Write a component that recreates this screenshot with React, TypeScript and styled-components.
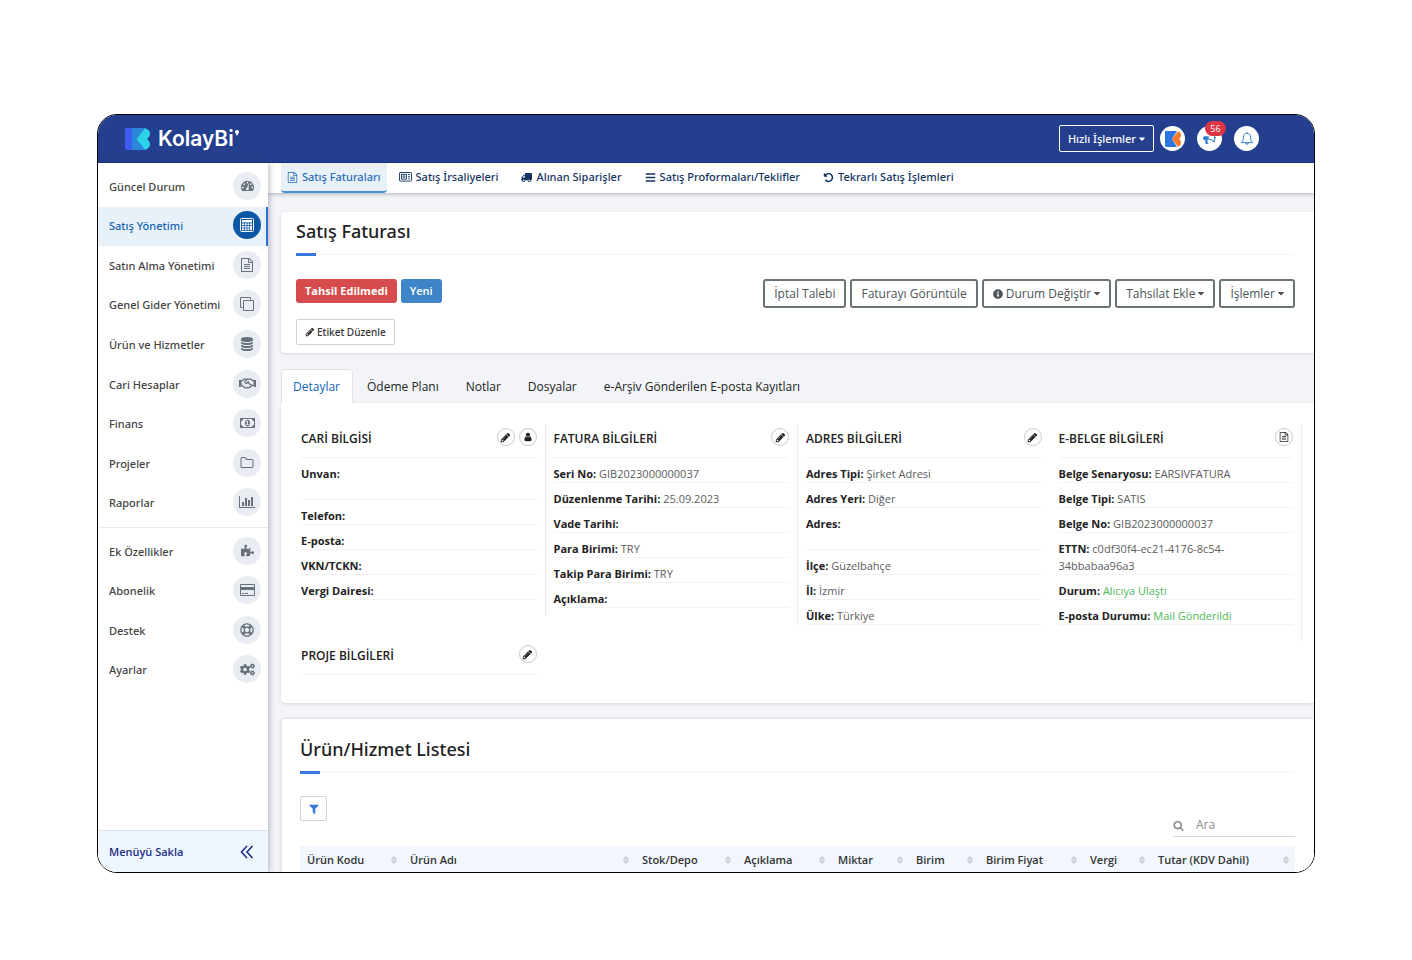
import React from "react";
import styled, { createGlobalStyle, css } from "styled-components";
import {
  FaRegHandshake,
  FaPuzzlePiece,
  FaRegLifeRing,
  FaCogs,
  FaTruck,
  FaBars,
  FaInfoCircle,
} from "react-icons/fa";

/* ---------- icons ---------- */

type IconProps = { size?: number };

const glyph = (d: string, width = 1792) =>
  function Glyph({ size = 14 }: IconProps) {
    return (
      <svg height={size} width={Math.round((size * width) / 1792)} viewBox={`0 0 ${width} 1792`} fill="currentColor" aria-hidden="true">
        <path d={d} />
      </svg>
    );
  };

const PencilIcon = glyph(
  "M491 1536l91-91-235-235-91 91v107h128v128h107zm523-928q0-22-22-22-10 0-17 7l-542 542q-7 7-7 17 0 22 22 22 10 0 17-7l542-542q7-7 7-17zm-54-192l416 416-832 832h-416v-416zm683 96q0 53-37 90l-166 166-416-416 166-165q36-38 90-38 53 0 91 38l235 234q37 39 37 91z"
);
const FileIcon = glyph(
  "M1596 380q28 28 48 76t20 88v1152q0 40-28 68t-68 28h-1344q-40 0-68-28t-28-68v-1600q0-40 28-68t68-28h896q40 0 88 20t76 48zm-444-244v376h376q-10-29-22-41l-313-313q-12-12-41-22zm384 1528v-1024h-416q-40 0-68-28t-28-68v-416h-768v1536h1280zm-1024-864q0-14 9-23t23-9h704q14 0 23 9t9 23v64q0 14-9 23t-23 9h-704q-14 0-23-9t-9-23v-64zm736 224q14 0 23 9t9 23v64q0 14-9 23t-23 9h-704q-14 0-23-9t-9-23v-64q0-14 9-23t23-9h704zm0 256q14 0 23 9t9 23v64q0 14-9 23t-23 9h-704q-14 0-23-9t-9-23v-64q0-14 9-23t23-9h704z"
);
const DatabaseIcon = glyph(
  "M896 768q237 0 443-43t325-127v170q0 69-103 128t-280 93.5-385 34.5-385-34.5-280-93.5-103-128v-170q119 84 325 127t443 43zm0 768q237 0 443-43t325-127v170q0 69-103 128t-280 93.5-385 34.5-385-34.5-280-93.5-103-128v-170q119 84 325 127t443 43zm0-384q237 0 443-43t325-127v170q0 69-103 128t-280 93.5-385 34.5-385-34.5-280-93.5-103-128v-170q119 84 325 127t443 43zm0-1152q208 0 385 34.5t280 93.5 103 128v128q0 69-103 128t-280 93.5-385 34.5-385-34.5-280-93.5-103-128v-128q0-69 103-128t280-93.5 385-34.5z"
);
const FolderIcon = glyph(
  "M1600 1312v-704q0-40-28-68t-68-28h-704q-40 0-68-28t-28-68v-64q0-40-28-68t-68-28h-320q-40 0-68 28t-28 68v960q0 40 28 68t68 28h1216q40 0 68-28t28-68zm128-704v704q0 92-66 158t-158 66h-1216q-92 0-158-66t-66-158v-960q0-92 66-158t158-66h320q92 0 158 66t66 158v32h672q92 0 158 66t66 158z"
);
const UndoIcon = glyph(
  "M1664 896q0 156-61 298t-164 245-245 164-298 61q-172 0-327-72.5t-264-204.5q-7-10-6.5-22.5t8.5-20.5l137-138q10-9 25-9 16 2 23 12 73 95 179 147t225 52q104 0 198.5-40.5t163.5-109.5 109.5-163.5 40.5-198.5-40.5-198.5-109.5-163.5-163.5-109.5-198.5-40.5q-98 0-188 35.5t-160 101.5l137 138q31 30 14 69-17 40-59 40h-448q-26 0-45-19t-19-45v-448q0-42 40-59 39-17 69 14l130 129q107-101 244.5-156.5t284.5-55.5q156 0 298 61t245 164 164 245 61 298z"
);
const CaretIcon = glyph(
  "M1024 704q0 26-19 45l-448 448q-19 19-45 19t-45-19l-448-448q-19-19-19-45t19-45 45-19h896q26 0 45 19t19 45z",
  1024
);
const FilterIcon = glyph(
  "M1595 295q17 41-14 70l-493 493v742q0 42-40 59-13 5-24 5-27 0-45-19l-256-256q-19-19-19-45v-486l-493-493q-31-29-14-70 17-39 59-39h1280q42 0 59 39z"
);
const ChartIcon = glyph(
  "M640 896v512h-256v-512h256zm384-512v1024h-256v-1024h256zm1024 1152v128h-2048v-1536h128v1408h1920zm-640-896v768h-256v-768h256zm384-384v1152h-256v-1152h256z",
  2048
);
const CloneIcon = glyph(
  "M1664 1632v-1088q0-13-9.5-22.5t-22.5-9.5h-1088q-13 0-22.5 9.5t-9.5 22.5v1088q0 13 9.5 22.5t22.5 9.5h1088q13 0 22.5-9.5t9.5-22.5zm128-1088v1088q0 66-47 113t-113 47h-1088q-66 0-113-47t-47-113v-1088q0-66 47-113t113-47h1088q66 0 113 47t47 113zm-384-384v160h-128v-160q0-13-9.5-22.5t-22.5-9.5h-1088q-13 0-22.5 9.5t-9.5 22.5v1088q0 13 9.5 22.5t22.5 9.5h160v128h-160q-66 0-113-47t-47-113v-1088q0-66 47-113t113-47h1088q66 0 113 47t47 113z"
);
const CardIcon = glyph(
  "M1760 128q66 0 113 47t47 113v1216q0 66-47 113t-113 47h-1600q-66 0-113-47t-47-113v-1216q0-66 47-113t113-47h1600zm-1600 128q-13 0-22.5 9.5t-9.5 22.5v224h1664v-224q0-13-9.5-22.5t-22.5-9.5h-1600zm1600 1280q13 0 22.5-9.5t9.5-22.5v-608h-1664v608q0 13 9.5 22.5t22.5 9.5h1600zm-1504-128v-128h256v128h-256zm384 0v-128h384v128h-384z",
  1920
);
const MoneyIcon = glyph(
  "M768 1152h384v-96h-128v-448h-114l-148 137 77 80q42-37 55-57h2v288h-128v96zm512-256q0 70-21 142t-59.5 134-101.5 101-138 39-138-39-101.5-101-59.5-134-21-142 21-142 59.5-134 101.5-101 138-39 138 39 101.5 101 59.5 134 21 142zm512 256v-512q-106 0-181-75t-75-181h-1152q0 106-75 181t-181 75v512q106 0 181 75t75 181h1152q0-106 75-181t181-75zm128-832v1152q0 26-19 45t-45 19h-1792q-26 0-45-19t-19-45v-1152q0-26 19-45t45-19h1792q26 0 45 19t19 45z",
  1920
);
const DashboardIcon = glyph(
  "M384 1152q0-53-37.5-90.5t-90.5-37.5-90.5 37.5-37.5 90.5 37.5 90.5 90.5 37.5 90.5-37.5 37.5-90.5zm192-448q0-53-37.5-90.5t-90.5-37.5-90.5 37.5-37.5 90.5 37.5 90.5 90.5 37.5 90.5-37.5 37.5-90.5zm428 481l101-382q6-26-7.5-48.5t-38.5-29.5-48 6.5-30 39.5l-101 382q-60 5-107 43.5t-63 98.5q-20 77 20 146t117 89 146-20 89-117q16-60-6-117t-72-91zm660-33q0-53-37.5-90.5t-90.5-37.5-90.5 37.5-37.5 90.5 37.5 90.5 90.5 37.5 90.5-37.5 37.5-90.5zm-640-640q0-53-37.5-90.5t-90.5-37.5-90.5 37.5-37.5 90.5 37.5 90.5 90.5 37.5 90.5-37.5 37.5-90.5zm448 192q0-53-37.5-90.5t-90.5-37.5-90.5 37.5-37.5 90.5 37.5 90.5 90.5 37.5 90.5-37.5 37.5-90.5zm320 448q0 261-141 483-19 29-54 29h-1402q-35 0-54-29-141-221-141-483 0-182 71-348t191-286 286-191 348-71 348 71 286 191 191 286 71 348z"
);
const SearchIcon = glyph(
  "M1216 832q0-185-131.5-316.5t-316.5-131.5-316.5 131.5-131.5 316.5 131.5 316.5 316.5 131.5 316.5-131.5 131.5-316.5zm512 832q0 52-38 90t-90 38q-54 0-90-38l-343-342q-179 124-399 124-143 0-273.5-55.5t-225-150-150-225-55.5-273.5 55.5-273.5 150-225 225-150 273.5-55.5 273.5 55.5 225 150 150 225 55.5 273.5q0 220-124 399l343 343q37 37 37 90z"
);
const UserIcon = glyph(
  "M1536 1399q0 109-62.5 187t-150.5 78h-854q-88 0-150.5-78t-62.5-187q0-85 8.5-160.5t31.5-152 58.5-131 94-89 134.5-34.5q131 128 313 128t313-128q76 0 134.5 34.5t94 89 58.5 131 31.5 152 8.5 160.5zm-256-887q0 159-112.5 271.5t-271.5 112.5-271.5-112.5-112.5-271.5 112.5-271.5 271.5-112.5 271.5 112.5 112.5 271.5z"
);
const MegaphoneIcon = glyph(
  "M1664 640q53 0 90.5 37.5t37.5 90.5-37.5 90.5-90.5 37.5v384q0 52-38 90t-90 38q-417-347-812-380-58 19-91 66t-31 100.5 40 92.5q-20 33-23 65.5t6 58 33.5 55 48 50 61.5 50.5q-29 58-111.5 83t-168.500 11.500-113.500-55.500q-7-23-27.500-87.500t-29-97-20-93.500-8.500-111 15.500-101.500h-122q-66 0-113-47t-47-113v-192q0-66 47-113t113-47h480q435 0 896-384 52 0 90 38t38 90v384zm-128 604v-954q-394 302-768 343v270q377 42 768 341z"
);

const CalculatorIcon = ({ size = 14 }: IconProps) => (
  <svg width={size} height={size} viewBox="0 0 14 14" aria-hidden="true">
    <rect x="0.5" y="0.5" width="13" height="13" rx="1" fill="none" stroke="currentColor" />
    <rect x="2" y="2" width="10" height="2.4" fill="currentColor" />
    {[5.4, 7.9, 10.4].map((y) =>
      [2, 4.7, 7.4].map((x) => <rect key={`${x}-${y}`} x={x} y={y} width="1.9" height="1.8" fill="currentColor" />)
    )}
    <rect x="10.1" y="5.4" width="1.9" height="1.8" fill="currentColor" />
    <rect x="10.1" y="7.9" width="1.9" height="4.3" fill="currentColor" />
  </svg>
);

const DeliveryNoteIcon = () => (
  <svg width="13" height="10" viewBox="0 0 13 10" fill="none" stroke="currentColor" strokeWidth="0.9" aria-hidden="true">
    <rect x="0.5" y="0.5" width="12" height="8.6" rx="0.6" />
    <rect x="2.4" y="2.3" width="5" height="4.8" />
    <circle cx="4.900" cy="4.600" r="1" />
    <path d="M9 2.600h2M9 4.700h2M9 6.800h2" />
  </svg>
);

const BellIcon = () => (
  <svg width="14" height="14" viewBox="0 0 14 14" fill="none" stroke="currentColor" strokeLinejoin="round" aria-hidden="true">
    <path d="M7 1.300c-2.400 0-3.600 1.800-3.600 3.900 0 3-.7 4.100-2 5.400h11.200c-1.300-1.300-2-2.400-2-5.400 0-2.100-1.200-3.900-3.600-3.900z" />
    <path d="M5.600 10.800a1.400 1.400 0 0 0 2.800 0M7 .4v.9" />
  </svg>
);

const DoubleLeftIcon = () => (
  <svg width="14" height="14" viewBox="0 0 14 14" fill="none" stroke="currentColor" strokeWidth="1.6" aria-hidden="true">
    <path d="M7 1L1.500 7 7 13M12.500 1L7 7l5.500 6" />
  </svg>
);

const SortIcon = () => (
  <svg width="6" height="8" viewBox="0 0 6 8" fill="none" stroke="#a9b2bb" strokeWidth="0.8" aria-hidden="true">
    <path d="M.6 2.900L3 .7l2.400 2.200zM.6 5.100L3 7.300l2.400-2.200z" />
  </svg>
);

const BrandMark = () => (
  <svg width="25" height="24" viewBox="0 0 25 24" aria-hidden="true">
    <path d="M0 1h8v22H2a2 2 0 0 1-2-2z" fill="#3f5cf2" />
    <path d="M7 1h14L12 12l9 11H7z" fill="#2b86dc" />
    <path d="M11.500 12L20 1.300c3 .6 5 2.600 5 5.400 0 2.400-1.300 4-3 5.300 1.700 1.200 3 2.900 3 5.300 0 2.800-2 4.800-5 5.400z" fill="#2ad4e6" />
  </svg>
);

const BrandTick = () => (
  <svg width="4" height="6" viewBox="0 0 4 6" aria-hidden="true">
    <path d="M2 0c1.300 0 2 .8 2 1.800C4 3.200 2.600 4.600 2 6 1.400 4.600 0 3.200 0 1.800 0 .8.700 0 2 0z" fill="#fff" />
  </svg>
);

const AccountMark = () => (
  <svg width="16" height="16" viewBox="0 0 16 16" aria-hidden="true">
    <path d="M0 0h12L7 8l5 8H1.500A1.500 1.500 0 0 1 0 14.500z" fill="#2c76e0" />
    <path d="M7 8l6-7.700c2 .6 3 2 3 3.900 0 1.600-.7 2.800-1.800 3.800 1.100 1 1.800 2.200 1.800 3.800 0 1.900-1 3.300-3 3.900z" fill="#f47a2c" />
  </svg>
);

/* ---------- shell ---------- */

const GlobalStyle = createGlobalStyle`
  *, *::before, *::after { box-sizing: border-box; }
  body {
    margin: 0;
    background: #fff;
    color: #333;
    font-family: "Open Sans", "Noto Sans", sans-serif;
    font-size: 11px;
    line-height: 16px;
  }
  button, input { font: inherit; color: inherit; }
  button { cursor: pointer; white-space: nowrap; }
  a { color: inherit; text-decoration: none; }
  ul, dl, dd, h1, h2, h3 { margin: 0; padding: 0; }
  ul { list-style: none; }
  svg { display: block; flex: none; }
`;

/* Noto Sans carries a medium weight, used for navigation and titles. */
const mediumFont = css`
  font-family: "Noto Sans", "Open Sans", sans-serif;
  font-weight: 500;
`;

const Page = styled.div`
  height: 100vh;
  padding: 114px 97px 87px;
`;

const Frame = styled.div`
  display: flex;
  flex-direction: column;
  height: 100%;
  overflow: hidden;
  border: 1px solid #000;
  border-radius: 20px;
`;

const Header = styled.header`
  display: flex;
  align-items: center;
  justify-content: space-between;
  flex: none;
  height: 48px;
  padding: 0 55px 0 27px;
  background: #233f8e;
  border-bottom: 1px solid #17308a;
`;

const Brand = styled.a`
  display: flex;
  align-items: center;
  color: #fff;
  font-family: Inter, "Open Sans", sans-serif;
  font-size: 21px;
  font-weight: 600;
  line-height: 24px;
`;

const BrandName = styled.span`
  margin: 0 1px 0 8px;
`;

const TickSlot = styled.span`
  align-self: flex-start;
  padding-top: 3px;
`;

const HeaderActions = styled.div`
  display: flex;
  align-items: center;
`;

const QuickButton = styled.button`
  display: flex;
  align-items: center;
  gap: 3px;
  height: 27px;
  margin-right: 6px;
  padding: 0 8px;
  color: #fff;
  ${mediumFont}
  background: transparent;
  border: 1px solid #fff;
  border-radius: 2px;
`;

const RoundAction = styled.button`
  position: relative;
  display: grid;
  place-items: center;
  width: 25px;
  height: 25px;
  margin-right: 12px;
  padding: 0;
  color: #2f80d0;
  background: #fff;
  border: 0;
  border-radius: 50%;

  &:last-child { margin-right: 0; }
`;

const CountBadge = styled.span`
  position: absolute;
  top: -5px;
  right: -4px;
  width: 21px;
  height: 15px;
  color: #fff;
  font-size: 9px;
  line-height: 15px;
  text-align: center;
  background: #dc3545;
  border-radius: 8px;
`;

const Body = styled.div`
  display: flex;
  flex: 1;
  min-height: 0;
`;

/* ---------- sidebar ---------- */

const Sidebar = styled.aside`
  position: relative;
  z-index: 1;
  display: flex;
  flex-direction: column;
  flex: none;
  width: 170px;
  background: #fff;
  box-shadow: 1px 0 6px rgba(40, 50, 70, 0.35);
`;

const MenuGroup = styled.ul<{ $height: number }>`
  display: grid;
  grid-auto-rows: 1fr;
  height: ${(p) => p.$height}px;
`;

const MenuDivider = styled.hr`
  width: 100%;
  margin: 4px 0;
  border: 0;
  border-top: 1px solid #e9ecef;
`;

const MenuIcon = styled.span<{ $active?: boolean }>`
  display: grid;
  place-items: center;
  width: 28px;
  height: 28px;
  margin-top: -2px;
  color: ${(p) => (p.$active ? "#fff" : "#66717c")};
  background: ${(p) => (p.$active ? "#0b57a4" : "#e9edf2")};
  border-radius: 50%;
`;

const MenuLink = styled.a<{ $active?: boolean }>`
  display: flex;
  align-items: center;
  justify-content: space-between;
  height: 100%;
  padding: 0 7px 0 11px;
  color: ${(p) => (p.$active ? "#1464b4" : "#444")};
  ${mediumFont}
  ${(p) =>
    p.$active &&
    css`
      background: #e8f1f8;
      box-shadow: inset -2px 0 0 #2f6fd8;
    `}
`;

const SidebarTop = styled.nav`
  flex: 1;
  padding-top: 4px;
`;

const HideMenu = styled.button`
  display: flex;
  align-items: center;
  justify-content: space-between;
  height: 42px;
  padding: 0 14px 0 11px;
  color: #1d2f86;
  font-weight: 600;
  background: #f0f6fd;
  border: 0;
  border-top: 1px solid #dde3ea;
`;

/* ---------- main ---------- */

const Main = styled.main`
  flex: 1;
  min-width: 0;
  overflow: hidden;
  background: #f2f4f7;
`;

const SubNav = styled.nav`
  display: flex;
  height: 30px;
  padding-left: 13px;
  background: #fff;
  box-shadow: 0 1px 4px rgba(40, 50, 70, 0.35);
`;

const SubLink = styled.a<{ $active?: boolean }>`
  display: flex;
  align-items: center;
  gap: 4px;
  margin-right: ${(p) => (p.$active ? 6 : 11)}px;
  padding: 0 6px;
  color: ${(p) => (p.$active ? "#2a6db8" : "#14345f")};
  ${mediumFont}
  border-bottom: 2px solid ${(p) => (p.$active ? "#4a8fd8" : "transparent")};
  background: ${(p) => (p.$active ? "#e8f1f8" : "transparent")};
  border-radius: 0 0 4px 4px;
  white-space: nowrap;
`;

const MirroredTruck = styled(FaTruck)`
  transform: scaleX(-1);
`;

const Content = styled.div`
  padding: 19px 0 0 13px;
`;

const Card = styled.section`
  background: #fff;
  border-radius: 4px 0 0 4px;
  box-shadow: 0 1px 3px rgba(40, 50, 70, 0.15);
`;

const InvoiceCard = styled(Card)`
  padding: 6px 19px 8px 15px;
  margin-bottom: 16px;
`;

const Title = styled.h1`
  padding-bottom: 10px;
  color: #222;
  ${mediumFont}
  font-size: 18px;
  line-height: 26px;
  border-bottom: 1px solid #f4f5f6;

  &::after {
    content: "";
    display: block;
    width: 20px;
    height: 3px;
    margin: 9px 0 -12px;
    background: #3a78e0;
  }
`;

const InvoiceBar = styled.div`
  display: flex;
  justify-content: space-between;
  padding-top: 24px;
`;

const Cluster = styled.div`
  display: flex;
  gap: 4px;
`;

const Tag = styled.span<{ $tone: string; $bold?: boolean }>`
  height: 24px;
  padding: 0 9px;
  color: #fff;
  font-weight: ${(p) => (p.$bold ? 700 : 600)};
  line-height: 24px;
  background: ${(p) => p.$tone};
  border-radius: 3px;
`;

const OutlineButton = styled.button`
  display: flex;
  align-items: center;
  gap: 3px;
  height: 29px;
  padding: 0 9px;
  color: #4c5457;
  font-size: 12px;
  background: #fff;
  border: 2px solid #6a7375;
  border-radius: 3px;
`;

const SmallButton = styled.button`
  display: flex;
  align-items: center;
  gap: 2px;
  height: 26px;
  margin-top: 11px;
  padding: 0 8px;
  color: #333;
  ${mediumFont}
  font-size: 10px;
  background: #fff;
  border: 1px solid #cfd2d6;
  border-radius: 2px;
`;

const Tabs = styled.div`
  display: flex;
  gap: 2px;
  height: 34px;
`;

const Tab = styled.button<{ $active?: boolean }>`
  padding: 0 12px 0 11px;
  color: ${(p) => (p.$active ? "#0f62b8" : "#222")};
  font-size: 12px;
  border: 1px solid ${(p) => (p.$active ? "#e1e4e8" : "transparent")};
  border-bottom: 0;
  border-radius: 4px 4px 0 0;
  background: ${(p) => (p.$active ? "#fff" : "transparent")};
`;

const DetailsCard = styled(Card)`
  margin-bottom: 15px;
  padding: 21px 12px 28px 11px;
`;

const DetailsGrid = styled.div`
  display: grid;
  grid-template-columns: repeat(4, 1fr);
  align-items: start;
`;

const InfoColumn = styled.section<{ $left?: boolean; $right?: boolean; $bottom?: number }>`
  padding: 0 8px ${(p) => p.$bottom ?? 0}px 8px;
  border-left: 1px solid ${(p) => (p.$left ? "#ececec" : "transparent")};
  border-right: ${(p) => (p.$right ? "1px solid #ececec" : "0")};
`;

const InfoHead = styled.div`
  display: flex;
  align-items: flex-start;
  justify-content: space-between;
  height: 34px;
  padding-top: 4px;
  border-bottom: 1px solid #f1f1f1;
`;

const InfoTitle = styled.h3`
  color: #222;
  font-size: 12px;
  font-weight: 600;
  line-height: 22px;
`;

const RoundButton = styled.button`
  display: grid;
  place-items: center;
  width: 18px;
  height: 18px;
  padding: 0;
  color: #222;
  background: #fff;
  border: 1px solid #c9ccd0;
  border-radius: 50%;
`;

const InfoRow = styled.div<{ $tall?: boolean }>`
  min-height: ${(p) => (p.$tall ? 42 : 25)}px;
  padding-top: 7px;
  line-height: 17px;
  border-bottom: 1px solid #f3f3f3;

  dt, dd { display: inline; }
  dt { color: #222; font-weight: 700; }
  dd { color: #5c5c5c; }
`;

const Success = styled.span`
  color: #4db856;
`;

const ListCard = styled(Card)`
  padding: 17px 19px 0 18px;
  border: 1px solid #e1e4e8;
  border-right: 0;
`;

const FilterButton = styled.button`
  display: grid;
  place-items: center;
  width: 27px;
  height: 25px;
  margin-top: 23px;
  padding: 0;
  color: #3a78e0;
  background: #fff;
  border: 1px solid #cfd2d6;
  border-radius: 2px;
`;

const SearchBox = styled.label`
  display: flex;
  align-items: center;
  gap: 12px;
  width: 122px;
  height: 24px;
  margin: -8px 0 9px auto;
  padding-top: 1px;
  color: #8a8a8a;
  border-bottom: 1px solid #d8d8d8;

  input {
    width: 90px;
    padding: 0;
    font-size: 12px;
    background: transparent;
    border: 0;
    outline: 0;
  }
  input::placeholder { color: #8a8a8a; opacity: 1; }
`;

const ItemTable = styled.table`
  width: 100%;
  table-layout: fixed;
  border-collapse: collapse;
  background: #f2f7fd;

  th {
    height: 28px;
    padding: 0 6px 0 7px;
    color: #333;
    font-weight: 600;
    text-align: left;
    white-space: nowrap;
  }
`;

const HeadCell = styled.div`
  display: flex;
  align-items: center;
  justify-content: space-between;
`;

/* ---------- data ---------- */

type MenuEntry = { label: string; icon: React.ReactNode; active?: boolean };

const mainMenu: MenuEntry[] = [
  { label: "Güncel Durum", icon: <DashboardIcon size={13} /> },
  { label: "Satış Yönetimi", icon: <CalculatorIcon size={14} />, active: true },
  { label: "Satın Alma Yönetimi", icon: <FileIcon size={14} /> },
  { label: "Genel Gider Yönetimi", icon: <CloneIcon size={14} /> },
  { label: "Ürün ve Hizmetler", icon: <DatabaseIcon size={14} /> },
  { label: "Cari Hesaplar", icon: <FaRegHandshake size={17} /> },
  { label: "Finans", icon: <MoneyIcon size={14} /> },
  { label: "Projeler", icon: <FolderIcon size={14} /> },
  { label: "Raporlar", icon: <ChartIcon size={14} /> },
];

const extraMenu: MenuEntry[] = [
  { label: "Ek Özellikler", icon: <FaPuzzlePiece size={13} /> },
  { label: "Abonelik", icon: <CardIcon size={14} /> },
  { label: "Destek", icon: <FaRegLifeRing size={14} /> },
  { label: "Ayarlar", icon: <FaCogs size={15} /> },
];

const subLinks: MenuEntry[] = [
  { label: "Satış Faturaları", icon: <FileIcon size={11} />, active: true },
  { label: "Satış İrsaliyeleri", icon: <DeliveryNoteIcon /> },
  { label: "Alınan Siparişler", icon: <MirroredTruck size={11} /> },
  { label: "Satış Proformaları/Teklifler", icon: <FaBars size={11} /> },
  { label: "Tekrarlı Satış İşlemleri", icon: <UndoIcon size={11} /> },
];

const tabs = ["Detaylar", "Ödeme Planı", "Notlar", "Dosyalar", "e-Arşiv Gönderilen E-posta Kayıtları"];

type Row = { label: string; value?: React.ReactNode; tall?: boolean };

const customerRows: Row[] = [
  { label: "Unvan:", tall: true },
  { label: "Telefon:" },
  { label: "E-posta:" },
  { label: "VKN/TCKN:" },
  { label: "Vergi Dairesi:" },
];
const invoiceRows: Row[] = [
  { label: "Seri No:", value: "GIB2023000000037" },
  { label: "Düzenlenme Tarihi:", value: "25.09.2023" },
  { label: "Vade Tarihi:" },
  { label: "Para Birimi:", value: "TRY" },
  { label: "Takip Para Birimi:", value: "TRY" },
  { label: "Açıklama:" },
];
const addressRows: Row[] = [
  { label: "Adres Tipi:", value: "Şirket Adresi" },
  { label: "Adres Yeri:", value: "Diğer" },
  { label: "Adres:", tall: true },
  { label: "İlçe:", value: "Güzelbahçe" },
  { label: "İl:", value: "İzmir" },
  { label: "Ülke:", value: "Türkiye" },
];
const documentRows: Row[] = [
  { label: "Belge Senaryosu:", value: "EARSIVFATURA" },
  { label: "Belge Tipi:", value: "SATIS" },
  { label: "Belge No:", value: "GIB2023000000037" },
  { label: "ETTN:", value: "c0df30f4-ec21-4176-8c54-34bbabaa96a3", tall: true },
  { label: "Durum:", value: <Success>Alıcıya Ulaştı</Success> },
  { label: "E-posta Durumu:", value: <Success>Mail Gönderildi</Success> },
];

const columns: { label: string; width?: number }[] = [
  { label: "Ürün Kodu", width: 103 },
  { label: "Ürün Adı" },
  { label: "Stok/Depo", width: 102 },
  { label: "Açıklama", width: 94 },
  { label: "Miktar", width: 78 },
  { label: "Birim", width: 70 },
  { label: "Birim Fiyat", width: 104 },
  { label: "Vergi", width: 68 },
  { label: "Tutar (KDV Dahil)", width: 144 },
];

/* ---------- parts ---------- */

const Menu = ({ items, height }: { items: MenuEntry[]; height: number }) => (
  <MenuGroup $height={height}>
    {items.map((item) => (
      <li key={item.label}>
        <MenuLink href="#" $active={item.active}>
          {item.label}
          <MenuIcon $active={item.active}>{item.icon}</MenuIcon>
        </MenuLink>
      </li>
    ))}
  </MenuGroup>
);

const Rows = ({ rows }: { rows: Row[] }) => (
  <dl>
    {rows.map((row) => (
      <InfoRow key={row.label} $tall={row.tall}>
        <dt>{row.label}</dt> <dd>{row.value}</dd>
      </InfoRow>
    ))}
  </dl>
);

const EditButton = () => (
  <RoundButton aria-label="Düzenle">
    <PencilIcon size={11} />
  </RoundButton>
);

export default function App() {
  return (
    <>
      <GlobalStyle />
      <Page>
        <Frame>
          <Header>
            <Brand href="#">
              <BrandMark />
              <BrandName>KolayBi</BrandName>
              <TickSlot>
                <BrandTick />
              </TickSlot>
            </Brand>
            <HeaderActions>
              <QuickButton>
                Hızlı İşlemler <CaretIcon size={10} />
              </QuickButton>
              <RoundAction aria-label="Hesap">
                <AccountMark />
              </RoundAction>
              <RoundAction aria-label="Duyurular">
                <MegaphoneIcon size={13} />
                <CountBadge>56</CountBadge>
              </RoundAction>
              <RoundAction aria-label="Bildirimler">
                <BellIcon />
              </RoundAction>
            </HeaderActions>
          </Header>
          <Body>
            <Sidebar>
              <SidebarTop>
                <Menu items={mainMenu} height={356} />
                <MenuDivider />
                <Menu items={extraMenu} height={158} />
              </SidebarTop>
              <HideMenu>
                Menüyü Sakla <DoubleLeftIcon />
              </HideMenu>
            </Sidebar>
            <Main>
              <SubNav>
                {subLinks.map((link) => (
                  <SubLink key={link.label} href="#" $active={link.active}>
                    {link.icon}
                    {link.label}
                  </SubLink>
                ))}
              </SubNav>
              <Content>
                <InvoiceCard>
                  <Title>Satış Faturası</Title>
                  <InvoiceBar>
                    <div>
                      <Cluster>
                        <Tag $tone="#d64b4b" $bold>
                          Tahsil Edilmedi
                        </Tag>
                        <Tag $tone="#3d85c8">Yeni</Tag>
                      </Cluster>
                    </div>
                    <Cluster>
                      <OutlineButton>İptal Talebi</OutlineButton>
                      <OutlineButton>Faturayı Görüntüle</OutlineButton>
                      <OutlineButton>
                        <FaInfoCircle size={10} /> Durum Değiştir <CaretIcon size={11} />
                      </OutlineButton>
                      <OutlineButton>
                        Tahsilat Ekle <CaretIcon size={11} />
                      </OutlineButton>
                      <OutlineButton>
                        İşlemler <CaretIcon size={11} />
                      </OutlineButton>
                    </Cluster>
                  </InvoiceBar>
                  <SmallButton>
                    <PencilIcon size={10} /> Etiket Düzenle
                  </SmallButton>
                </InvoiceCard>

                <Tabs role="tablist">
                  {tabs.map((label, i) => (
                    <Tab key={label} role="tab" aria-selected={i === 0} $active={i === 0}>
                      {label}
                    </Tab>
                  ))}
                </Tabs>
                <DetailsCard>
                  <DetailsGrid>
                    <InfoColumn $bottom={16}>
                      <InfoHead>
                        <InfoTitle>CARİ BİLGİSİ</InfoTitle>
                        <Cluster>
                          <EditButton />
                          <RoundButton aria-label="Cari">
                            <UserIcon size={10} />
                          </RoundButton>
                        </Cluster>
                      </InfoHead>
                      <Rows rows={customerRows} />
                    </InfoColumn>
                    <InfoColumn $left $bottom={8}>
                      <InfoHead>
                        <InfoTitle>FATURA BİLGİLERİ</InfoTitle>
                        <EditButton />
                      </InfoHead>
                      <Rows rows={invoiceRows} />
                    </InfoColumn>
                    <InfoColumn $left>
                      <InfoHead>
                        <InfoTitle>ADRES BİLGİLERİ</InfoTitle>
                        <EditButton />
                      </InfoHead>
                      <Rows rows={addressRows} />
                    </InfoColumn>
                    <InfoColumn $right $bottom={16}>
                      <InfoHead>
                        <InfoTitle>E-BELGE BİLGİLERİ</InfoTitle>
                        <RoundButton aria-label="Belge">
                          <FileIcon size={10} />
                        </RoundButton>
                      </InfoHead>
                      <Rows rows={documentRows} />
                    </InfoColumn>
                    <InfoColumn>
                      <InfoHead>
                        <InfoTitle>PROJE BİLGİLERİ</InfoTitle>
                        <EditButton />
                      </InfoHead>
                    </InfoColumn>
                  </DetailsGrid>
                </DetailsCard>

                <ListCard>
                  <Title as="h2">Ürün/Hizmet Listesi</Title>
                  <FilterButton aria-label="Filtrele">
                    <FilterIcon size={12} />
                  </FilterButton>
                  <SearchBox>
                    <SearchIcon size={11} />
                    <input type="text" placeholder="Ara" aria-label="Ara" />
                  </SearchBox>
                  <ItemTable>
                    <colgroup>
                      {columns.map((c) => (
                        <col key={c.label} width={c.width} />
                      ))}
                    </colgroup>
                    <thead>
                      <tr>
                        {columns.map((c) => (
                          <th key={c.label} scope="col">
                            <HeadCell>
                              {c.label}
                              <SortIcon />
                            </HeadCell>
                          </th>
                        ))}
                      </tr>
                    </thead>
                  </ItemTable>
                </ListCard>
              </Content>
            </Main>
          </Body>
        </Frame>
      </Page>
    </>
  );
}
